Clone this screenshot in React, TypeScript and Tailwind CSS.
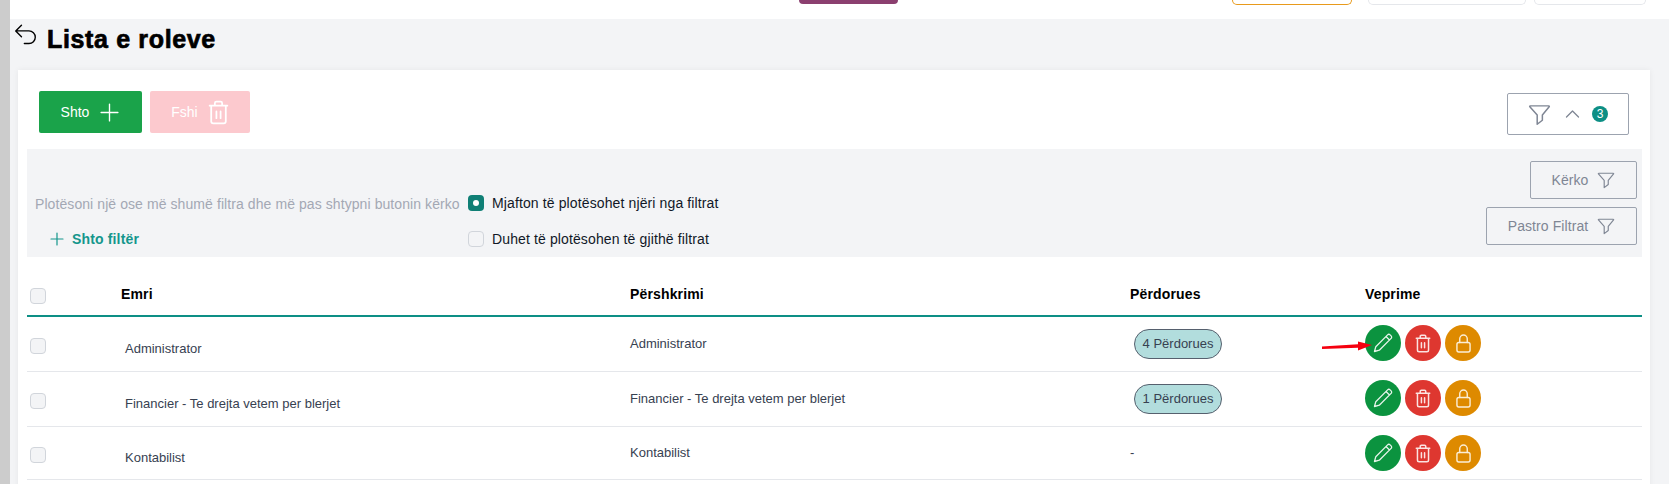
import React from "react";

const FunnelIcon = ({ className }: { className?: string }) => (
  <svg viewBox="0 0 20 20" fill="none" stroke="currentColor" strokeWidth="1.3" strokeLinejoin="round" strokeLinecap="round" className={className}>
    <path d="M2 2.500h16c.5 0 .7.4.4.8L12.500 10.500V15L8 18.500V10.500L1.600 3.300c-.3-.4-.1-.8.4-.8z" />
  </svg>
);

const TrashIcon = ({ className, stroke = "1.7" }: { className?: string; stroke?: string }) => (
  <svg viewBox="0 0 20 24" fill="none" stroke="currentColor" strokeWidth={stroke} strokeLinecap="round" strokeLinejoin="round" className={className}>
    <path d="M1.500 5.500h17M6.500 5.500V3c0-.8.6-1.500 1.500-1.500h4c.9 0 1.500.7 1.500 1.500v2.500M3 5.500v15c0 1.200.9 2 2 2h10c1.100 0 2-.8 2-2v-15M8 11v6.500M12 11v6.500" />
  </svg>
);

const PencilIcon = () => (
  <svg viewBox="0 0 20 20" fill="none" stroke="currentColor" strokeWidth="1.300" strokeLinejoin="round" strokeLinecap="round" className="w-5 h-5">
    <path d="M1.500 18.500l1.300-4.800L14.600 1.900c.7-.7 1.800-.7 2.500 0l1 1c.7.7.7 1.800 0 2.500L6.300 17.200l-4.800 1.300zM13 3.500l3.500 3.500" />
  </svg>
);

const LockIcon = () => (
  <svg viewBox="0 0 16 20" fill="none" stroke="currentColor" strokeWidth="1.500" strokeLinejoin="round" strokeLinecap="round" className="w-[15px] h-[19px]">
    <rect x="1" y="9" width="14" height="10" rx="2" />
    <path d="M4 9V5a4 4 0 0 1 8 0v4" />
  </svg>
);

const ActionButtons = () => (
  <div className="flex gap-1">
    <button className="w-9 h-9 rounded-full bg-[#0b933f] text-[#e6f4ea] flex items-center justify-center"><PencilIcon /></button>
    <button className="w-9 h-9 rounded-full bg-[#de3730] text-[#fbe3e1] flex items-center justify-center"><TrashIcon className="w-[16px] h-[19px]" stroke="1.900" /></button>
    <button className="w-9 h-9 rounded-full bg-[#de8a00] text-[#fbeed6] flex items-center justify-center"><LockIcon /></button>
  </div>
);

const Checkbox = ({ className = "" }: { className?: string }) => (
  <span className={`block w-4 h-4 rounded-[4px] border border-[#d1d5db] bg-[#f3f4f6] ${className}`} />
);

const roles = [
  { name: "Administrator", desc: "Administrator", users: "4 Përdorues", h: "h-[55px]", act: "-mt-[2px]", arrow: true },
  { name: "Financier - Te drejta vetem per blerjet", desc: "Financier - Te drejta vetem per blerjet", users: "1 Përdorues", h: "h-[55px]", act: "-mt-[2px]", arrow: false },
  { name: "Kontabilist", desc: "Kontabilist", users: null, h: "h-[53px]", act: "mt-0", arrow: false },
];

export default function App() {
  return (
    <div className="flex h-[484px] w-full overflow-hidden bg-white font-['Liberation_Sans',Arial,sans-serif]">
      <div className="w-[10px] shrink-0 bg-[#cccccc]" />
      <div className="flex-1 flex flex-col min-w-0">
        {/* cut off top bar */}
        <div className="h-[19px] shrink-0 flex items-start bg-white">
          <div className="ml-[789px] w-[99px] h-[4px] rounded-b-md bg-[#8b3f6f]" />
          <div className="ml-[334px] w-[120px] h-[5px] rounded-b-md border border-t-0 border-[#e89a1c]" />
          <div className="ml-4 w-[158px] h-[5px] rounded-b-md border border-t-0 border-[#e5e7eb]" />
          <div className="ml-2 w-[112px] h-[5px] rounded-b-md border border-t-0 border-[#e5e7eb]" />
        </div>

        <div className="flex-1 bg-[#f3f4f6] pl-2 pr-[19px] min-h-0">
          <div className="h-[51px] flex items-start">
            <svg viewBox="0 0 20 20" fill="none" stroke="currentColor" strokeWidth="1.200" strokeLinecap="round" strokeLinejoin="round" className="w-[23px] h-[23px] mt-[5px] -ml-1 text-black">
              <path d="M6.500 1L1.500 6l5 5M1.500 6h11.500a5.500 5.500 0 0 1 0 11H9" />
            </svg>
            <h1 className="ml-[10px] mt-[6px] text-[25px] leading-[28px] font-bold text-black tracking-[0.65px] [-webkit-text-stroke:0.7px_black]">Lista e roleve</h1>
          </div>

          <div className="bg-white shadow-[0_0_6px_rgba(0,0,0,0.06)] pl-[9px] pr-2 h-[420px]">
            <div className="h-[79px] flex items-start justify-between">
              <div className="flex gap-2 mt-[21px] ml-3">
                <button className="w-[103px] h-[42px] rounded-[2px] bg-[#1aa34a] text-white text-sm flex items-center justify-center gap-[10px]">
                  Shto
                  <svg viewBox="0 0 20 20" fill="none" stroke="currentColor" strokeWidth="1.300" strokeLinecap="round" className="w-[21px] h-[21px]"><path d="M10 2v16M2 10h16" /></svg>
                </button>
                <button className="w-[100px] h-[42px] rounded-[2px] bg-[#fcc9ce] text-white text-sm flex items-center justify-center gap-[10px]">
                  Fshi
                  <TrashIcon className="w-[21px] h-[25px]" />
                </button>
              </div>
              <button className="mt-[23px] mr-[13px] w-[122px] h-[42px] rounded-[2px] border border-[#9ca3af] text-[#7f8694] flex items-center justify-center">
                <FunnelIcon className="w-[23px] h-[23px]" />
                <svg viewBox="0 0 14 8" fill="none" stroke="currentColor" strokeWidth="1.300" strokeLinecap="round" strokeLinejoin="round" className="ml-[14px] w-[15px] h-2"><path d="M1 7l6-6 6 6" /></svg>
                <span className="ml-3 w-4 h-4 rounded-full bg-[#0d8f85] text-white text-[12px] leading-4 text-center">3</span>
              </button>
            </div>

            <div className="h-[108px] bg-[#f3f4f6] relative flex justify-between pl-2 pr-[5px]">
              <div className="flex flex-col">
                <div className="mt-[46px] flex">
                  <div className="w-[433px] text-sm leading-4 tracking-[0.08px] text-[#a3a8b4] whitespace-nowrap pt-px">Plotësoni një ose më shumë filtra dhe më pas shtypni butonin kërko</div>
                  <div className="flex flex-col gap-5">
                    <div className="flex items-center gap-2 text-sm leading-4 tracking-[0.12px] text-[#111827]">
                      <span className="w-4 h-4 rounded-[4px] bg-[#0f7f75] flex items-center justify-center"><span className="w-[6px] h-[6px] rounded-full bg-white" /></span>
                      Mjafton të plotësohet njëri nga filtrat
                    </div>
                    <div className="flex items-center gap-2 text-sm leading-4 tracking-[0.12px] text-[#111827]">
                      <Checkbox />
                      Duhet të plotësohen të gjithë filtrat
                    </div>
                  </div>
                </div>
              </div>
              <div className="absolute left-[23px] top-[82px] flex items-center gap-2 text-[#14968c] text-sm leading-4 font-bold tracking-[0.15px]">
                <svg viewBox="0 0 14 14" fill="none" stroke="currentColor" strokeWidth="1.200" strokeLinecap="round" className="w-[14px] h-[14px]"><path d="M7 1v12M1 7h12" /></svg>
                Shto filtër
              </div>
              <div className="flex flex-col items-end gap-2 mt-3">
                <button className="w-[107px] h-[38px] rounded-[2px] border border-[#9ca3af] text-[#7f8694] text-sm tracking-[0.08px] flex items-center justify-center gap-[9px]">
                  Kërko
                  <FunnelIcon className="w-[18px] h-[18px]" />
                </button>
                <button className="w-[151px] h-[38px] rounded-[2px] border border-[#9ca3af] text-[#7f8694] text-sm tracking-[0.08px] flex items-center justify-center gap-[9px]">
                  Pastro Filtrat
                  <FunnelIcon className="w-[18px] h-[18px]" />
                </button>
              </div>
            </div>

            <div className="mt-[13px]">
              <div className="grid grid-cols-[94px_509px_500px_235px_1fr] h-[47px] items-center border-b-2 border-[#0d8f85] text-sm font-bold text-black tracking-[0.15px]">
                <div className="pl-[3px]"><Checkbox className="mt-[7px]" /></div>
                <div className="mt-[3px]">Emri</div>
                <div className="mt-[3px]">Përshkrimi</div>
                <div className="mt-[3px]">Përdorues</div>
                <div className="mt-[3px]">Veprime</div>
              </div>
              {roles.map((r) => (
                <div key={r.name} className={`grid grid-cols-[94px_509px_500px_235px_1fr] ${r.h} items-center border-b border-[#e5e7eb] text-[13px] text-[#374151]`}>
                  <div className="pl-[3px]"><Checkbox className="mt-1" /></div>
                  <div className="pl-1 mt-[10px]">{r.name}</div>
                  <div className="-mt-px">{r.desc}</div>
                  <div>
                    {r.users ? (
                      <span className="ml-1 inline-flex items-center justify-center w-[88px] h-[30px] rounded-full border border-[#56606e] bg-[#b2dddd] text-[#374151]">{r.users}</span>
                    ) : "-"}
                  </div>
                  <div className={`relative ${r.act}`}>
                    {r.arrow && (
                      <svg viewBox="0 0 50 10" className="absolute -left-[43px] top-4 z-10 w-[50px] h-[10px]">
                        <path d="M0 5.500L36 3.200V.5L50 4L36 9.500V6.800L0 8z" fill="#f5000f" />
                      </svg>
                    )}
                    <ActionButtons />
                  </div>
                </div>
              ))}
            </div>
          </div>
        </div>
      </div>
    </div>
  );
}
